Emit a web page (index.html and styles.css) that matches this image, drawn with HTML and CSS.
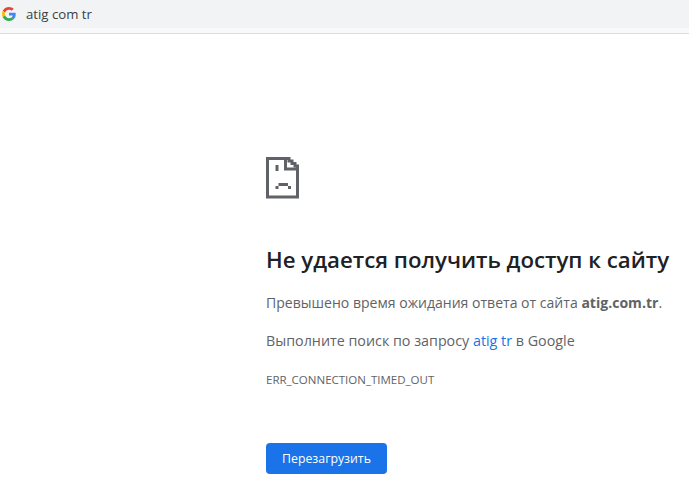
FILE: index.html
```html
<!DOCTYPE html>
<html lang="ru">
<head>
    <meta charset="UTF-8">
    <title>atig com tr</title>
    <link rel="stylesheet" href="styles.css">
</head>
<body>

    <!-- Address bar -->
    <div class="omnibox">
        <div class="omnibox-row">
            <svg class="g-logo" width="14" height="14" viewBox="0 0 48 48">
                <path fill="#ea4335" d="M24 9.500c3.500 0 6.700 1.300 9.200 3.400l6.900-6.900C35.900 2.400 30.300 0 24 0 14.600 0 6.500 5.400 2.600 13.200l8 6.200C12.500 13.600 17.800 9.500 24 9.500z"/>
                <path fill="#4285f4" d="M47 24.500c0-1.600-.1-3.100-.4-4.500H24v9h12.900c-.6 3-2.200 5.500-4.700 7.200l7.700 6C44.400 37.900 47 31.800 47 24.500z"/>
                <path fill="#fbbc05" d="M10.600 28.600c-.5-1.400-.8-3-.8-4.600s.3-3.200.8-4.600l-8-6.200C.9 16.500 0 20.100 0 24s.9 7.500 2.600 10.800l8-6.200z"/>
                <path fill="#34a853" d="M24 48c6.500 0 11.900-2.100 15.900-5.800l-7.700-6c-2.200 1.500-4.900 2.300-8.200 2.300-6.200 0-11.500-4.100-13.400-9.900l-8 6.200C6.500 42.600 14.600 48 24 48z"/>
            </svg>
            <span class="query">atig com tr</span>
        </div>
    </div>

    <!-- Error page -->
    <div class="interstitial">
        <svg class="sad-tab" width="34" height="42" viewBox="0 0 34 42">
            <path class="sad-line" d="M1.500 40V1.500H23V4H26V6.500H29V9H31.500V40Z"/>
            <path class="sad-line" d="M19.500 1.500V12H31.500"/>
            <path class="sad-line" d="M11 8V14"/>
            <path class="sad-line" d="M12.500 27.500H22"/>
            <rect class="sad-dot" x="9.500" y="29" width="3" height="3"/>
            <rect class="sad-dot" x="22" y="29" width="3" height="3"/>
        </svg>
        <h1>Не удается получить доступ к сайту</h1>
        <p class="summary">Превышено время ожидания ответа от сайта <b>atig.com.tr</b>.</p>
        <p class="summary suggest">Выполните поиск по запросу <a href="#">atig tr</a> в Google</p>
        <div class="error-code">ERR_CONNECTION_TIMED_OUT</div>
        <button class="reload">Перезагрузить</button>
    </div>

</body>
</html>
```

FILE: styles.css
```css
body {
    font-family: "Open Sans", "Noto Sans", Arial, sans-serif;
    margin: 0;
    background-color: #fff;
    overflow: hidden;
}

.omnibox {
    height: 33px;
    background-color: #f8f9fa;
    border-bottom: 1px solid #dcdcdc;
}

.omnibox-row {
    display: flex;
    align-items: center;
    height: 28px;
    padding-left: 2px;
    background-color: #f1f3f4;
}

.g-logo {
    margin-right: 10px;
}

.query {
    font-size: 13.200px;
    color: #3c4043;
}

.interstitial {
    padding: 123px 0 0 266px;
    white-space: nowrap;
}

.sad-tab {
    display: block;
    margin-bottom: 46px;
}

.sad-line {
    fill: none;
    stroke: #5f6368;
    stroke-width: 3;
}

.sad-dot {
    fill: #5f6368;
}

h1 {
    font-size: 22.250px;
    font-weight: 600;
    line-height: 30px;
    color: #202124;
    margin: 0 0 18px 0;
}

.summary {
    font-size: 14.050px;
    line-height: 20px;
    color: #5f6368;
    margin: 0;
}

.suggest {
    font-size: 14.300px;
    margin-top: 18px;
}

.summary a {
    color: #1a73e8;
    text-decoration: none;
}

.error-code {
    font-size: 11.500px;
    line-height: 14px;
    color: #5f6368;
    margin-top: 22px;
}

.reload {
    display: block;
    width: 121px;
    height: 31px;
    margin-top: 56px;
    padding: 0;
    background-color: #1a73e8;
    color: #fff;
    border: none;
    border-radius: 4px;
    font-family: inherit;
    font-size: 12.300px;
    font-weight: 500;
}
```
